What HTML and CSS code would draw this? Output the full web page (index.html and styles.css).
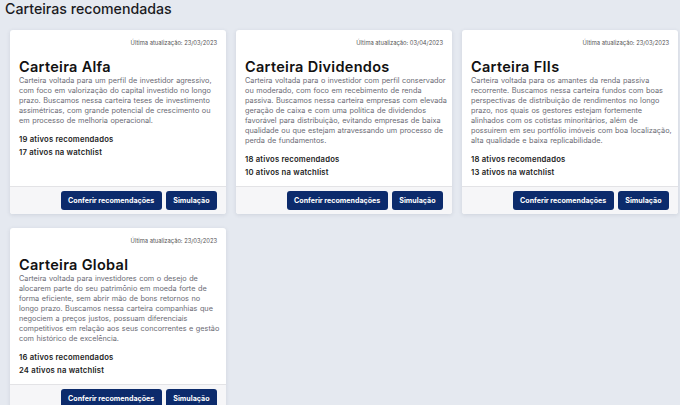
FILE: index.html
```html
<!DOCTYPE html>
<html lang="pt-BR">
  <head>
    <meta charset="UTF-8" />
    <meta name="viewport" content="width=device-width, initial-scale=1.0" />
    <title>Carteiras recomendadas</title>
    <link rel="stylesheet" href="styles.css">
  </head>
  <body>
    <h1 class="pageTitle">Carteiras recomendadas</h1>

    <div class="grid">
      <div class="card">
        <div class="cardBody">
          <div class="updated">Última atualização: 23/03/2023</div>
          <h2 class="cardTitle">Carteira Alfa</h2>
          <p class="desc">
            Carteira voltada para um perfil de investidor agressivo, com foco em valorização do capital investido no longo prazo. Buscamos nessa carteira teses de investimento assimétricas, com grande potencial de crescimento ou em processo de melhoria operacional.
          </p>
          <div class="stats">
            <div>19 ativos recomendados</div>
            <div>17 ativos na watchlist</div>
          </div>
        </div>
        <div class="cardFooter">
          <button class="btn">Conferir recomendações</button>
          <button class="btn">Simulação</button>
        </div>
      </div>

      <div class="card">
        <div class="cardBody">
          <div class="updated">Última atualização: 03/04/2023</div>
          <h2 class="cardTitle">Carteira Dividendos</h2>
          <p class="desc">
            Carteira voltada para o investidor com perfil conservador ou moderado, com foco em recebimento de renda passiva. Buscamos nessa carteira empresas com elevada geração de caixa e com uma política de dividendos favorável para distribuição, evitando empresas de baixa qualidade ou que estejam atravessando um processo de perda de fundamentos.
          </p>
          <div class="stats">
            <div>18 ativos recomendados</div>
            <div>10 ativos na watchlist</div>
          </div>
        </div>
        <div class="cardFooter">
          <button class="btn">Conferir recomendações</button>
          <button class="btn">Simulação</button>
        </div>
      </div>

      <div class="card">
        <div class="cardBody">
          <div class="updated">Última atualização: 23/03/2023</div>
          <h2 class="cardTitle">Carteira FIIs</h2>
          <p class="desc">
            Carteira voltada para os amantes da renda passiva recorrente. Buscamos nessa carteira fundos com boas perspectivas de distribuição de rendimentos no longo prazo, nos quais os gestores estejam fortemente alinhados com os cotistas minoritários, além de possuirem em seu portfólio imóveis com boa localização, alta qualidade e baixa replicabilidade.
          </p>
          <div class="stats">
            <div>18 ativos recomendados</div>
            <div>13 ativos na watchlist</div>
          </div>
        </div>
        <div class="cardFooter">
          <button class="btn">Conferir recomendações</button>
          <button class="btn">Simulação</button>
        </div>
      </div>

      <div class="card">
        <div class="cardBody">
          <div class="updated">Última atualização: 23/03/2023</div>
          <h2 class="cardTitle">Carteira Global</h2>
          <p class="desc">
            Carteira voltada para investidores com o desejo de alocarem parte do seu patrimônio em moeda forte de forma eficiente, sem abrir mão de bons retornos no longo prazo. Buscamos nessa carteira companhias que negociem a preços justos, possuam diferenciais competitivos em relação aos seus concorrentes e gestão com histórico de excelência.
          </p>
          <div class="stats">
            <div>16 ativos recomendados</div>
            <div>24 ativos na watchlist</div>
          </div>
        </div>
        <div class="cardFooter">
          <button class="btn">Conferir recomendações</button>
          <button class="btn">Simulação</button>
        </div>
      </div>
    </div>
  </body>
</html>
```

FILE: styles.css
```css
body {
  margin: 0;
  background: #e5e9f0;
  font-family: Inter, "Open Sans", sans-serif;
  color: #1b1b1f;
}

.pageTitle {
  margin: 0;
  padding: 0 5px;
  font-size: 14.2px;
  font-weight: 500;
  line-height: 17px;
  height: 30px;
}

.grid {
  display: grid;
  grid-template-columns: repeat(3, 216px);
  column-gap: 10px;
  row-gap: 14px;
  padding-left: 10px;
}

.card {
  background: #fff;
  border-radius: 3px;
  box-shadow: 0 1px 4px rgba(40, 50, 80, 0.12);
  display: flex;
  flex-direction: column;
  overflow: hidden;
}

.cardBody {
  flex: 1;
  padding: 9px 9px 7px;
}

.updated {
  text-align: right;
  font-size: 5.8px;
  line-height: 8px;
  color: #555;
}

.cardTitle {
  margin: 11px 0 0;
  font-size: 14.5px;
  font-weight: 600;
  letter-spacing: 0.3px;
  line-height: 17px;
  color: #111;
}

.desc {
  margin: 1px -4px 0 0;
  font-size: 7.3px;
  word-spacing: 0.5px;
  line-height: 10px;
  color: #6a6a74;
}

.stats {
  margin-top: 8px;
  font-size: 7.7px;
  font-weight: 600;
  letter-spacing: 0.2px;
  line-height: 12.5px;
  color: #222;
}

.cardFooter {
  border-top: 1px solid #e3e3e6;
  background: #f6f6f8;
  padding: 4px 9px 4px;
  display: flex;
  justify-content: flex-end;
  gap: 4px;
}

.btn {
  height: 19px;
  padding: 0 7.5px;
  border: none;
  border-radius: 3px;
  background: #0c2b6c;
  color: #fff;
  font-family: inherit;
  font-size: 7.1px;
  font-weight: 700;
}
```
